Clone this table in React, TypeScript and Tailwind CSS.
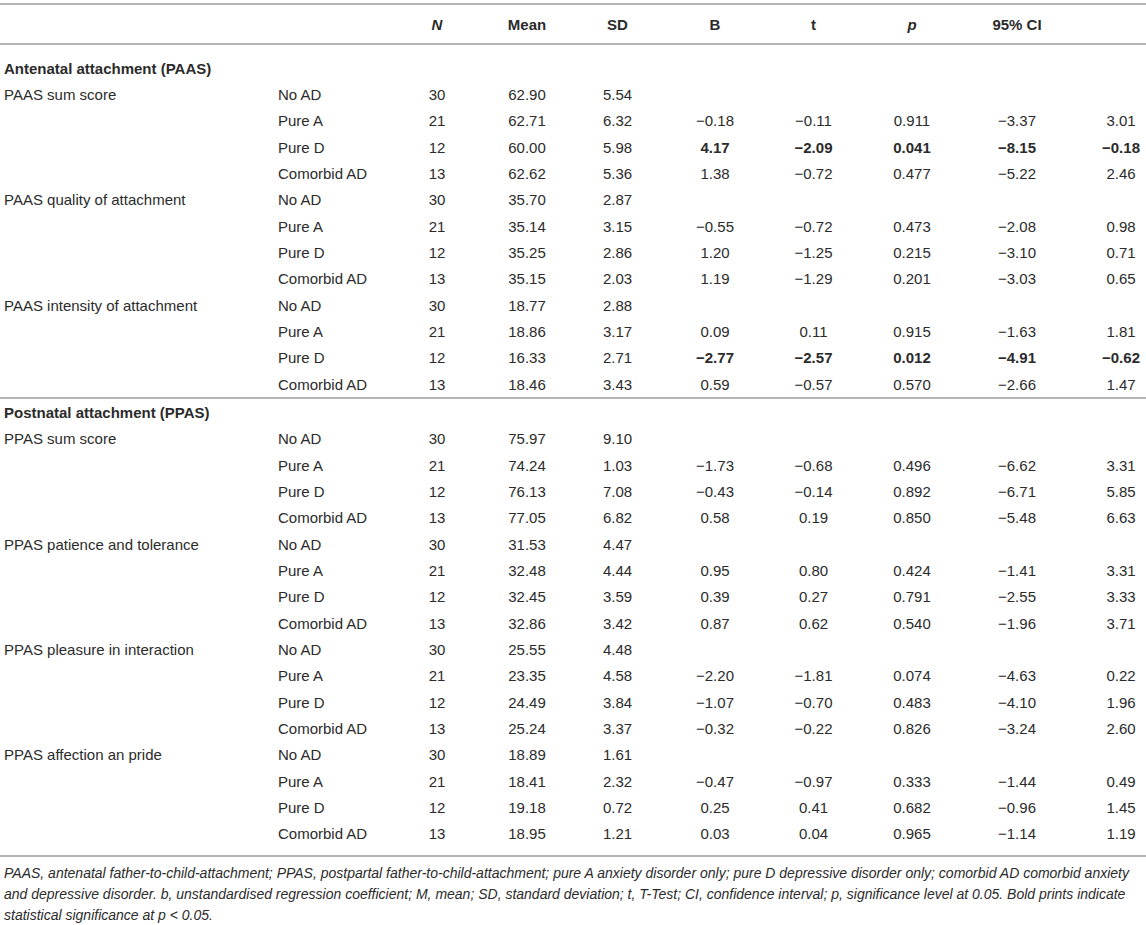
const cols = "grid grid-cols-[270px_120px_94px_86px_95px_100px_97px_100px_110px_74px]";

type Row = { label?: string; group: string; n: string; mean: string; sd: string; rest?: string[]; bold?: boolean };

const groups = ["No AD", "Pure A", "Pure D", "Comorbid AD"];

function block(label: string, ns: string[][], rest: (string[] | null)[], boldIdx = -1): Row[] {
  return groups.map((g, i) => ({
    label: i == 0 ? label : "",
    group: g,
    n: ns[i][0],
    mean: ns[i][1],
    sd: ns[i][2],
    rest: rest[i] || undefined,
    bold: i == boldIdx,
  }));
}

const antenatal: Row[] = [
  ...block(
    "PAAS sum score",
    [["30", "62.90", "5.54"], ["21", "62.71", "6.32"], ["12", "60.00", "5.98"], ["13", "62.62", "5.36"]],
    [null, ["−0.18", "−0.11", "0.911", "−3.37", "3.01"], ["4.17", "−2.09", "0.041", "−8.15", "−0.18"], ["1.38", "−0.72", "0.477", "−5.22", "2.46"]],
    2
  ),
  ...block(
    "PAAS quality of attachment",
    [["30", "35.70", "2.87"], ["21", "35.14", "3.15"], ["12", "35.25", "2.86"], ["13", "35.15", "2.03"]],
    [null, ["−0.55", "−0.72", "0.473", "−2.08", "0.98"], ["1.20", "−1.25", "0.215", "−3.10", "0.71"], ["1.19", "−1.29", "0.201", "−3.03", "0.65"]]
  ),
  ...block(
    "PAAS intensity of attachment",
    [["30", "18.77", "2.88"], ["21", "18.86", "3.17"], ["12", "16.33", "2.71"], ["13", "18.46", "3.43"]],
    [null, ["0.09", "0.11", "0.915", "−1.63", "1.81"], ["−2.77", "−2.57", "0.012", "−4.91", "−0.62"], ["0.59", "−0.57", "0.570", "−2.66", "1.47"]],
    2
  ),
];

const postnatal: Row[] = [
  ...block(
    "PPAS sum score",
    [["30", "75.97", "9.10"], ["21", "74.24", "1.03"], ["12", "76.13", "7.08"], ["13", "77.05", "6.82"]],
    [null, ["−1.73", "−0.68", "0.496", "−6.62", "3.31"], ["−0.43", "−0.14", "0.892", "−6.71", "5.85"], ["0.58", "0.19", "0.850", "−5.48", "6.63"]]
  ),
  ...block(
    "PPAS patience and tolerance",
    [["30", "31.53", "4.47"], ["21", "32.48", "4.44"], ["12", "32.45", "3.59"], ["13", "32.86", "3.42"]],
    [null, ["0.95", "0.80", "0.424", "−1.41", "3.31"], ["0.39", "0.27", "0.791", "−2.55", "3.33"], ["0.87", "0.62", "0.540", "−1.96", "3.71"]]
  ),
  ...block(
    "PPAS pleasure in interaction",
    [["30", "25.55", "4.48"], ["21", "23.35", "4.58"], ["12", "24.49", "3.84"], ["13", "25.24", "3.37"]],
    [null, ["−2.20", "−1.81", "0.074", "−4.63", "0.22"], ["−1.07", "−0.70", "0.483", "−4.10", "1.96"], ["−0.32", "−0.22", "0.826", "−3.24", "2.60"]]
  ),
  ...block(
    "PPAS affection an pride",
    [["30", "18.89", "1.61"], ["21", "18.41", "2.32"], ["12", "19.18", "0.72"], ["13", "18.95", "1.21"]],
    [null, ["−0.47", "−0.97", "0.333", "−1.44", "0.49"], ["0.25", "0.41", "0.682", "−0.96", "1.45"], ["0.03", "0.04", "0.965", "−1.14", "1.19"]]
  ),
];

function DataRow({ row }: { row: Row }) {
  const r = row.rest || ["", "", "", "", ""];
  const b = row.bold ? "font-bold" : "";
  return (
    <div className={cols + " h-[26.33px] items-center"}>
      <div className="pl-1">{row.label}</div>
      <div className="pl-2">{row.group}</div>
      <div className="text-center">{row.n}</div>
      <div className="text-center">{row.mean}</div>
      <div className="text-center">{row.sd}</div>
      <div className={"text-center " + b}>{r[0]}</div>
      <div className={"text-center " + b}>{r[1]}</div>
      <div className={"text-center " + b}>{r[2]}</div>
      <div className={"text-center " + b}>{r[3]}</div>
      <div className={"text-center pl-6 " + b}>{r[4]}</div>
    </div>
  );
}

function Section({ title, rows }: { title: string; rows: Row[] }) {
  return (
    <div>
      <div className="h-[26.33px] flex items-center pl-1 font-bold">{title}</div>
      {rows.map((row, i) => (
        <DataRow key={i} row={row} />
      ))}
    </div>
  );
}

export default function App() {
  return (
    <div className="w-[1146px] bg-white text-[#2b2b2b] text-[15px] leading-none pt-[3px]" style={{ fontFamily: '"Liberation Sans", Arial, sans-serif' }}>
      <div className={cols + " h-[42px] items-center border-t-2 border-b-2 border-[#b4b4b4] font-bold"}>
        <div></div>
        <div></div>
        <div className="text-center italic">N</div>
        <div className="text-center">Mean</div>
        <div className="text-center">SD</div>
        <div className="text-center">B</div>
        <div className="text-center">t</div>
        <div className="text-center italic">p</div>
        <div className="text-center">95% CI</div>
        <div></div>
      </div>
      <div className="pt-[10px]">
        <Section title="Antenatal attachment (PAAS)" rows={antenatal} />
      </div>
      <div className="border-t-2 border-[#b4b4b4]">
        <Section title="Postnatal attachment (PPAS)" rows={postnatal} />
      </div>
      <div className="border-t-2 border-[#b4b4b4] mt-[8px] pt-[6px] pl-1 text-[14px] leading-[21px] italic">
        PAAS, antenatal father-to-child-attachment; PPAS, postpartal father-to-child-attachment; pure A anxiety disorder only; pure D depressive disorder only; comorbid AD comorbid anxiety and depressive disorder. b, unstandardised regression coefficient; M, mean; SD, standard deviation; t, T-Test; CI, confidence interval; p, significance level at 0.05. Bold prints indicate statistical significance at p &lt; 0.05.
      </div>
    </div>
  );
}
